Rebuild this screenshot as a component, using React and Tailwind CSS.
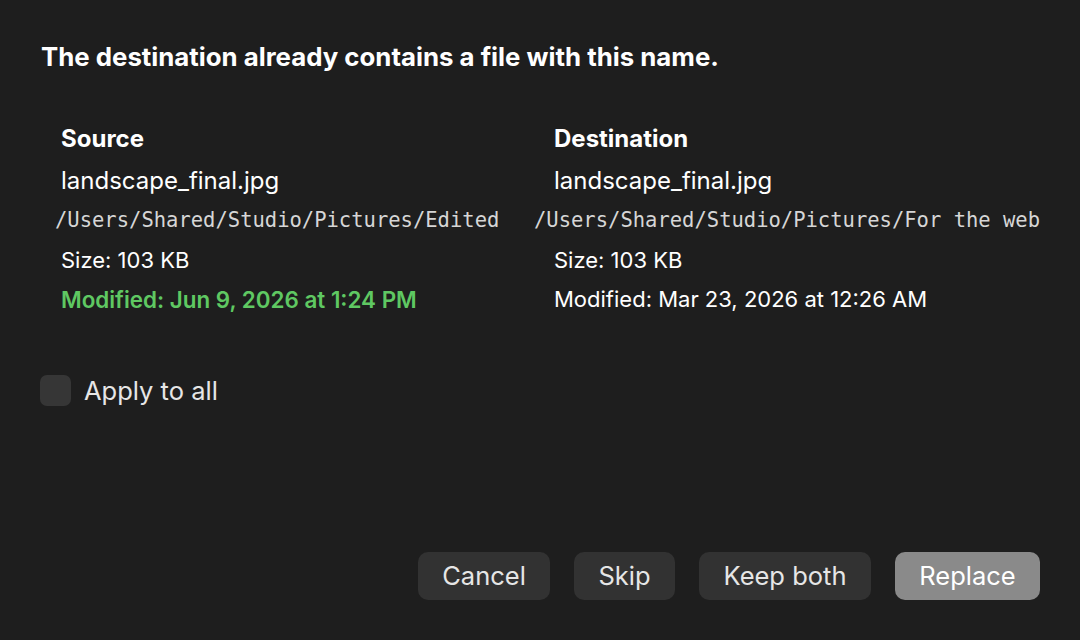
import React, { useState } from 'react'

const FileInfo = ({ label, name, path, size, modified, highlight, pathShift }) => (
    <div className="flex flex-col">
        <div className="h-[42px] flex items-center font-bold text-[24px] text-white">{label}</div>
        <div className="h-[41px] flex items-center text-[24px] text-white">{name}</div>
        <div className={`h-[39px] flex items-center text-[20.5px] text-[#d6d6d6] whitespace-nowrap ${pathShift}`} style={{ fontFamily: '"DejaVu Sans Mono", "Liberation Mono", monospace' }}>
            {path}
        </div>
        <div className="h-[40px] flex items-center text-[22px] text-white">{size}</div>
        <div className={`h-[39px] flex items-center ${highlight ? 'text-[22.4px] font-semibold text-[#5fc862]' : 'text-[22px] text-white'}`}>
            {modified}
        </div>
    </div>
)

export default function App() {
    const [applyAll, setApplyAll] = useState(false)

    return (
        <section className="w-[1080px] h-[640px] bg-[#1e1e1e] flex flex-col pl-[41px] pr-[40px] pt-[39px] pb-[40px]" style={{ fontFamily: 'Inter, "Noto Sans", sans-serif' }}>
            <h1 className="text-[25.8px] font-bold text-white leading-[36px] whitespace-nowrap">
                The destination already contains a file with this name.
            </h1>

            <div className="grid grid-cols-[493px_1fr] pl-[20px] mt-[43px]">
                <FileInfo
                    label="Source"
                    name="landscape_final.jpg"
                    path="/Users/Shared/Studio/Pictures/Edited"
                    size="Size: 103 KB"
                    modified="Modified: Jun 9, 2026 at 1:24 PM"
                    highlight
                    pathShift="-ml-[6px]"
                />
                <FileInfo
                    label="Destination"
                    name="landscape_final.jpg"
                    path="/Users/Shared/Studio/Pictures/For the web"
                    size="Size: 103 KB"
                    modified="Modified: Mar 23, 2026 at 12:26 AM"
                    pathShift="-ml-[20px]"
                />
            </div>

            <label className="flex items-center gap-[13px] mt-[56px] -ml-[1px] cursor-pointer select-none">
                <span
                    onClick={() => setApplyAll(!applyAll)}
                    className="w-[31px] h-[31px] rounded-[7px] bg-[#363636] flex items-center justify-center text-white text-[18px]"
                >
                    {applyAll ? '✓' : ''}
                </span>
                <span className="text-[25.5px] leading-[31px] text-[#e6e6e6]">Apply to all</span>
            </label>

            <div className="mt-auto flex justify-end gap-[24px]">
                <button className="h-[48px] w-[132px] rounded-[10px] bg-[#323232] text-[25.5px] text-[#e6e6e6]">Cancel</button>
                <button className="h-[48px] w-[101px] rounded-[10px] bg-[#323232] text-[25.5px] text-[#e6e6e6]">Skip</button>
                <button className="h-[48px] w-[172px] rounded-[10px] bg-[#323232] text-[25.5px] text-[#e6e6e6]">Keep both</button>
                <button className="h-[48px] w-[145px] rounded-[10px] bg-[#8a8a8a] text-[25.5px] text-white">Replace</button>
            </div>
        </section>
    )
}
